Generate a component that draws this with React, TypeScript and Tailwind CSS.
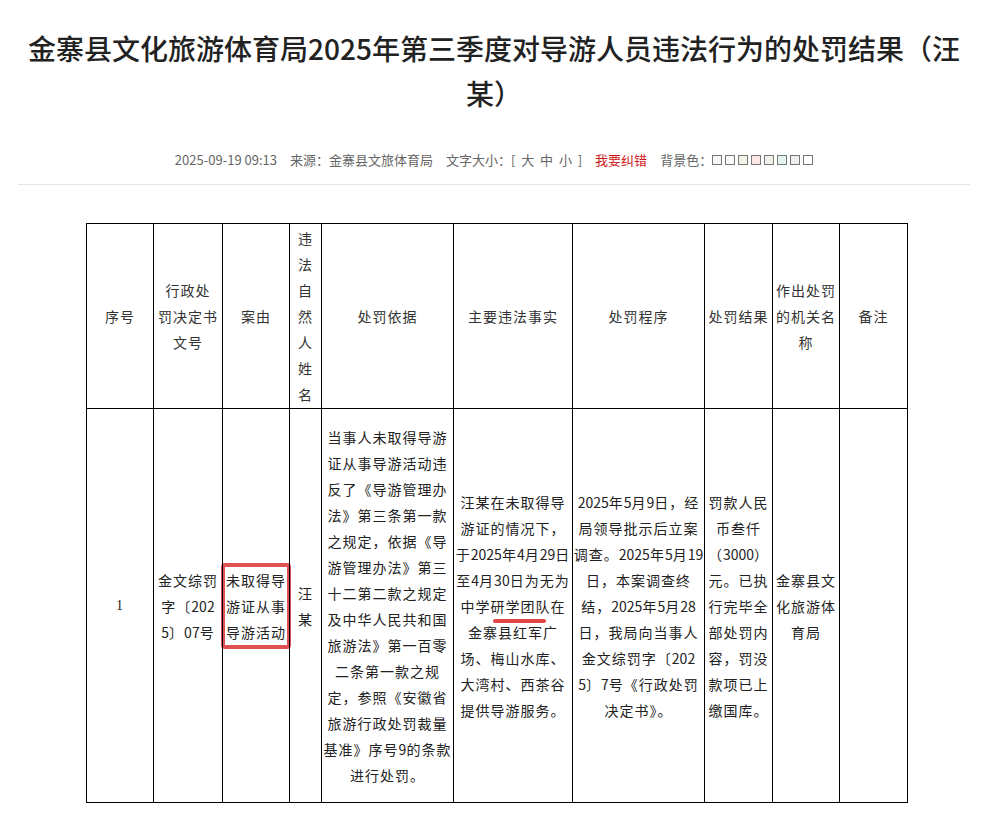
import React from "react";

const cjk = '"Noto Sans CJK SC", "Microsoft YaHei", sans-serif';

// keep digit runs tighter than the spaced-out CJK glyphs
function Line({ text }: { text: string }) {
  const parts = text.split(/([0-9]+)/);
  return (
    <div className="whitespace-nowrap">
      {parts.map((p, i) =>
        /^[0-9]+$/.test(p) ? (
          <span key={i} className="tracking-[0px]">
            {p}
          </span>
        ) : (
          <span key={i}>{p}</span>
        )
      )}
    </div>
  );
}

function Lines({ lines }: { lines: string[] }) {
  return (
    <>
      {lines.map((l, i) => (
        <Line key={i} text={l} />
      ))}
    </>
  );
}

const swatches = [
  "bg-[#f7f7f7]",
  "bg-[#fafafa]",
  "bg-[#f2f2e6]",
  "bg-[#fbe6e8]",
  "bg-[#eef2e8]",
  "bg-[#e4f5ee]",
  "bg-[#ededed]",
  "bg-[#ffffff]",
];

const basis = [
  "当事人未取得导游",
  "证从事导游活动违",
  "反了《导游管理办",
  "法》第三条第一款",
  "之规定，依据《导",
  "游管理办法》第三",
  "十二第二款之规定",
  "及中华人民共和国",
  "旅游法》第一百零",
  "二条第一款之规",
  "定，参照《安徽省",
  "旅游行政处罚裁量",
  "基准》序号9的条款",
  "进行处罚。",
];

const procedure = [
  "2025年5月9日，经",
  "局领导批示后立案",
  "调查。2025年5月19",
  "日，本案调查终",
  "结，2025年5月28",
  "日，我局向当事人",
  "金文综罚字〔202",
  "5〕7号《行政处罚",
  "决定书》。",
];

const result = [
  "罚款人民",
  "币叁仟",
  "（3000）",
  "元。已执",
  "行完毕全",
  "部处罚内",
  "容，罚没",
  "款项已上",
  "缴国库。",
];

export default function App() {
  return (
    <div className="w-[988px] bg-white text-[#222]" style={{ fontFamily: cjk }}>
      <h1 className="pt-[26px] text-center text-[28px] leading-[45px] font-medium text-[#222]">
        金寨县文化旅游体育局2025年第三季度对导游人员违法行为的处罚结果（汪
        <br />
        某）
      </h1>

      <div className="mt-[34px] flex items-center justify-center gap-[13px] text-[13px] leading-[20px] text-[#666]">
        <span>2025-09-19 09:13</span>
        <span>来源：金寨县文旅体育局</span>
        <span className="whitespace-pre">文字大小：[  大  中  小  ]</span>
        <span className="text-[#d01a1a]">我要纠错</span>
        <span className="flex items-center">
          背景色：
          <span className="flex gap-[3px]">
            {swatches.map((c, i) => (
              <span key={i} className={`h-[10px] w-[10px] border border-[#777] ${c}`} />
            ))}
          </span>
        </span>
      </div>

      <div className="mx-[18px] mt-[14px] h-px bg-[#e6e6e6]" />

      <table className="ml-[86px] mt-[38px] w-[821px] table-fixed border-collapse text-[14px] leading-[26px] tracking-[1px] text-center">
        <colgroup>
          <col className="w-[67px]" />
          <col className="w-[69px]" />
          <col className="w-[67px]" />
          <col className="w-[32px]" />
          <col className="w-[132px]" />
          <col className="w-[119px]" />
          <col className="w-[132px]" />
          <col className="w-[68px]" />
          <col className="w-[67px]" />
          <col className="w-[68px]" />
        </colgroup>
        <thead>
          <tr className="h-[185px] text-[#333]">
            <th className="border border-black p-0 font-normal">序号</th>
            <th className="border border-black p-0 font-normal">
              <Lines lines={["行政处", "罚决定书", "文号"]} />
            </th>
            <th className="border border-black p-0 font-normal">案由</th>
            <th className="border border-black p-0 font-normal">
              <Lines lines={["违", "法", "自", "然", "人", "姓", "名"]} />
            </th>
            <th className="border border-black p-0 font-normal">处罚依据</th>
            <th className="border border-black p-0 font-normal">主要违法事实</th>
            <th className="border border-black p-0 font-normal">处罚程序</th>
            <th className="border border-black p-0 font-normal">处罚结果</th>
            <th className="border border-black p-0 font-normal">
              <Lines lines={["作出处罚", "的机关名", "称"]} />
            </th>
            <th className="border border-black p-0 font-normal">备注</th>
          </tr>
        </thead>
        <tbody>
          <tr className="h-[394px] text-[#222]">
            <td className="border border-black p-0" style={{ fontFamily: '"Liberation Serif", serif' }}>
              1
            </td>
            <td className="border border-black p-0">
              <Lines lines={["金文综罚", "字〔202", "5〕07号"]} />
            </td>
            <td className="border border-black p-0">
              <div className="-mx-[2px] rounded-[4px] border-[4px] border-[#e05252] py-0">
                <Lines lines={["未取得导", "游证从事", "导游活动"]} />
              </div>
            </td>
            <td className="border border-black p-0">
              <Lines lines={["汪", "某"]} />
            </td>
            <td className="border border-black p-0">
              <Lines lines={basis} />
            </td>
            <td className="border border-black p-0">
              <Line text="汪某在未取得导" />
              <Line text="游证的情况下，" />
              <Line text="于2025年4月29日" />
              <Line text="至4月30日为无为" />
              <div className="whitespace-nowrap">
                中学
                <span className="relative">
                  研学团
                  <span className="absolute left-[2px] right-[-10px] top-[23px] h-[4px] rounded-full bg-[#e04848]" />
                </span>
                队在
              </div>
              <Line text="金寨县红军广" />
              <Line text="场、梅山水库、" />
              <Line text="大湾村、西茶谷" />
              <Line text="提供导游服务。" />
            </td>
            <td className="border border-black p-0">
              <Lines lines={procedure} />
            </td>
            <td className="border border-black p-0">
              <Lines lines={result} />
            </td>
            <td className="border border-black p-0">
              <Lines lines={["金寨县文", "化旅游体", "育局"]} />
            </td>
            <td className="border border-black p-0" />
          </tr>
        </tbody>
      </table>
      <div className="h-[17px]" />
    </div>
  );
}
